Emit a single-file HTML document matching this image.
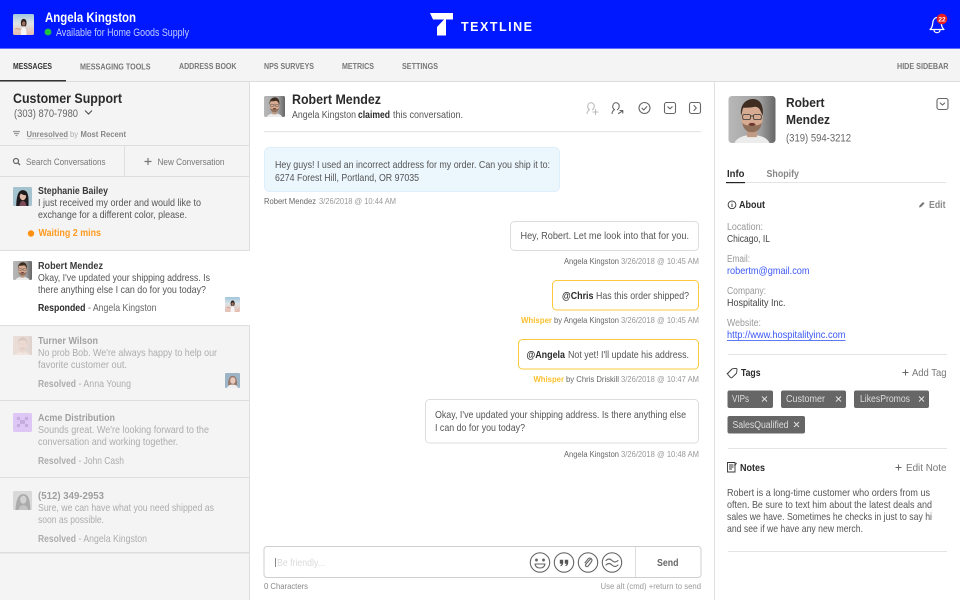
<!DOCTYPE html>
<html lang="en"><head><meta charset="utf-8"><title>Textline</title>
<style>
html,body{margin:0;padding:0;width:960px;height:600px;overflow:hidden;background:#fff}
svg{display:block;filter:blur(.3px)}
text{font-family:"Liberation Sans",sans-serif;font-size:10.300px;fill:#555;white-space:pre}
.b{font-weight:700}
.dk{fill:#2a2a2a}
.nav{font-size:7.800px;font-weight:700;fill:#777}
.name{font-size:10.300px;font-weight:700;fill:#3a3a3a}
.meta{font-size:8.600px;fill:#999}
.metad{font-size:8.600px;fill:#666}
.w{font-size:8.600px;font-weight:700;fill:#fcc02e}
.lab{font-size:9.700px;fill:#999}
.val{font-size:10.200px;fill:#444}
.act{font-size:10.200px;fill:#777}
.chip{font-size:9.800px;fill:#ddd}
.ic{fill:none;stroke:#666;stroke-width:1.1;stroke-linecap:round;stroke-linejoin:round}
</style></head><body>
<svg width="960" height="600" viewBox="0 0 960 600" xmlns="http://www.w3.org/2000/svg">
<defs>
<linearGradient id="mbg" x1="0" x2="1" y1="0" y2="0"><stop offset="0" stop-color="#b8b8b8"/><stop offset=".65" stop-color="#a2a2a2"/><stop offset="1" stop-color="#666"/></linearGradient>
<linearGradient id="abg" x1="0" x2="0" y1="0" y2="1"><stop offset="0" stop-color="#9fc6de"/><stop offset=".45" stop-color="#dfe3e6"/><stop offset="1" stop-color="#e6bcae"/></linearGradient>
<clipPath id="rc"><rect width="48" height="48" rx="3.500"/></clipPath>
<symbol id="man" viewBox="0 0 48 48"><g clip-path="url(#rc)">
<rect width="48" height="48" fill="url(#mbg)"/>
<path d="M6 48c3-6 10-8 18-8s15 2 18 8z" fill="#ececec"/>
<rect x="19" y="33" width="10" height="9" fill="#c09a84"/>
<ellipse cx="24" cy="22" rx="11" ry="15" fill="#d6ab92"/>
<path d="M13 20c-2-11 5-17 12-17s11 6 10 17l-2-4c-1-3-3-5-6-5-5 1-9 1-12 1-1 2-1 5-2 8z" fill="#3f2d22"/>
<path d="M14 27c1 7 5 10 10 10s9-3 10-10c-2 3-6 3-10 3s-8 0-10-3z" fill="#7a5c48" fill-opacity=".75"/>
<ellipse cx="24" cy="29" rx="3.500" ry="1.500" fill="#6f3530"/>
<g fill="none" stroke="#333" stroke-width=".8"><rect x="14.500" y="19" width="8" height="5" rx="1.500"/><rect x="25.500" y="19" width="8" height="5" rx="1.500"/><path d="M22.500 20.500h3"/></g>
</g></symbol>
<symbol id="angela" viewBox="0 0 48 48"><g clip-path="url(#rc)">
<rect width="48" height="48" fill="url(#abg)"/>
<path d="M18 48c0-11 1-18 6-18s7 7 7 18z" fill="#f6f6f6"/>
<path d="M18 20c0-6 3-9 6.500-9s6.500 3 6.500 9c0 4-1 7-2 8h-9c-1-1-2-4-2-8z" fill="#2c2320"/>
<ellipse cx="24.500" cy="22" rx="3.800" ry="4.800" fill="#a0715c"/>
<path d="M5 32c5-1 9 0 13 2l-1 3c-4-1-8-2-12-2z" fill="#dba99a"/>
</g></symbol>
<symbol id="steph" viewBox="0 0 48 48"><g clip-path="url(#rc)">
<rect width="48" height="48" fill="#a5c2cf"/>
<path d="M8 48c1-20 3-40 17-40s15 18 14 40z" fill="#1e1a1c"/>
<ellipse cx="25" cy="23" rx="8" ry="10.500" fill="#e2bba8"/>
<path d="M15 22c1-7 6-10 11-10s8 4 8 9c-6 0-13-3-14-5-1 3-3 5-5 6z" fill="#1e1a1c"/>
<path d="M16 48c1-9 5-13 9-13s8 4 9 13z" fill="#7d4a58"/>
</g></symbol>
<symbol id="anna" viewBox="0 0 48 48"><g clip-path="url(#rc)">
<rect width="48" height="48" fill="#7f9fb6"/>
<path d="M10 40c-1-20 5-31 15-31s15 11 13 31z" fill="#7a4f3c"/>
<ellipse cx="25" cy="24" rx="8.500" ry="10.500" fill="#e4bcaa"/>
<path d="M6 48c3-9 10-11 18-11s15 2 18 11z" fill="#eee"/>
</g></symbol>
<symbol id="gray" viewBox="0 0 48 48"><g clip-path="url(#rc)">
<rect width="48" height="48" fill="#b9b9b9"/>
<path d="M6 48c2-24 6-40 20-40s17 16 18 40z" fill="#555"/>
<ellipse cx="26" cy="22" rx="8" ry="10" fill="#aaa"/>
<path d="M14 48c2-9 6-12 12-12s10 3 12 12z" fill="#8b8b8b"/>
</g></symbol>
</defs>

<!-- header -->
<rect width="960" height="49" fill="#0018ff"/>
<rect y="48" width="960" height="1" fill="#5d6cff"/>
<use href="#angela" x="13" y="14" width="21" height="21"/>
<text x="45" y="22" textLength="91" lengthAdjust="spacingAndGlyphs" style="font-size:13.500px;fill:#fff;font-weight:700">Angela Kingston</text>
<circle cx="48" cy="32" r="3.400" fill="#22c33c"/>
<text x="56" y="36" textLength="133" lengthAdjust="spacingAndGlyphs" style="font-size:10.800px;fill:#c3cbff">Available for Home Goods Supply</text>
<path d="M430 13H453V19.500H446V35.500H437V27L444 19.500H433z" fill="#fff"/>
<text x="461" y="31" textLength="71" lengthAdjust="spacing" class="b" style="font-size:12.500px;fill:#fff">TEXTLINE</text>
<path d="M930 29.500c2.500-2 2.500-4.500 2.800-7 .3-3 2.200-5 4.200-5s3.900 2 4.200 5c.3 2.500.3 5 2.800 7z M934 29.700c0 4 6 4 6 0" fill="none" stroke="#fff" stroke-width="1.200" stroke-linejoin="round"/>
<circle cx="942" cy="19" r="5.300" fill="#e81d20"/>
<text x="942" y="21.300" text-anchor="middle" class="b" style="font-size:6.500px;fill:#fff">22</text>

<!-- nav -->
<rect y="49" width="960" height="32" fill="#f4f4f4"/>
<rect y="81" width="960" height="1" fill="#dddddd"/>
<rect y="80" width="66" height="1.500" fill="#333"/>
<text x="13" y="69" textLength="39" lengthAdjust="spacingAndGlyphs" class="nav" style="fill:#333">MESSAGES</text>
<text x="80" y="69.500" textLength="70.500" lengthAdjust="spacingAndGlyphs" class="nav">MESSAGING TOOLS</text>
<text x="179" y="69" textLength="57.500" lengthAdjust="spacingAndGlyphs" class="nav">ADDRESS BOOK</text>
<text x="264" y="69" textLength="50" lengthAdjust="spacingAndGlyphs" class="nav">NPS SURVEYS</text>
<text x="342" y="69" textLength="32" lengthAdjust="spacingAndGlyphs" class="nav">METRICS</text>
<text x="402" y="69" textLength="36" lengthAdjust="spacingAndGlyphs" class="nav">SETTINGS</text>
<text x="897" y="69" textLength="51.500" lengthAdjust="spacingAndGlyphs" class="nav">HIDE SIDEBAR</text>

<!-- left panel -->
<rect y="82" width="249" height="518" fill="#f4f4f4"/>
<rect x="249" y="82" width="1" height="518" fill="#dedede"/>
<text x="13" y="103" textLength="109" lengthAdjust="spacingAndGlyphs" class="b dk" style="font-size:14px">Customer Support</text>
<text x="14" y="117" textLength="64" lengthAdjust="spacingAndGlyphs" style="font-size:10.800px;fill:#666">(303) 870-7980</text>
<path d="M85 110.500l3.500 3.500 3.500-3.500" fill="none" stroke="#555" stroke-width="1.200"/>
<path d="M13 131.500h7M14 133.500h5M15.500 135.500h2" stroke="#999" stroke-width="1.200"/>
<text x="26.500" y="137" textLength="41.500" lengthAdjust="spacingAndGlyphs" class="b" style="font-size:8.600px;fill:#888">Unresolved</text>
<rect x="26.500" y="138.500" width="41.500" height=".6" fill="#bbb"/>
<text x="70" y="137" textLength="8" lengthAdjust="spacingAndGlyphs" style="font-size:8.600px;fill:#aaa">by</text>
<text x="80.500" y="137" textLength="45.500" lengthAdjust="spacingAndGlyphs" class="b" style="font-size:8.600px;fill:#888">Most Recent</text>
<rect y="145" width="249" height="1" fill="#dedede"/>
<rect y="176" width="249" height="1" fill="#dedede"/>
<rect x="124" y="146" width="1" height="30" fill="#dedede"/>
<circle cx="16" cy="161" r="2.500" fill="none" stroke="#666" stroke-width="1.200"/><path d="M18 163l2 2" stroke="#666" stroke-width="1.400"/>
<text x="26" y="165" textLength="79.500" lengthAdjust="spacingAndGlyphs" style="font-size:9.500px;fill:#777">Search Conversations</text>
<path d="M148 158v7M144.500 161.500h7" stroke="#777" stroke-width="1.200"/>
<text x="157.500" y="165" textLength="67" lengthAdjust="spacingAndGlyphs" style="font-size:9.500px;fill:#777">New Conversation</text>

<use href="#steph" x="13" y="187" width="19" height="19"/>
<text x="38" y="194" textLength="70" lengthAdjust="spacingAndGlyphs" class="name">Stephanie Bailey</text>
<text x="38" y="206" textLength="163" lengthAdjust="spacingAndGlyphs">I just received my order and would like to</text>
<text x="38" y="218" textLength="149" lengthAdjust="spacingAndGlyphs">exchange for a different color, please.</text>
<circle cx="31" cy="233.500" r="3.200" fill="#ff9012"/>
<text x="38.500" y="236" textLength="62.500" lengthAdjust="spacingAndGlyphs" class="b" style="fill:#ff9a1f">Waiting 2 mins</text>
<rect y="250" width="250" height="1" fill="#dedede"/>

<rect y="251" width="250" height="74" fill="#fff"/>
<use href="#man" x="13" y="261" width="19" height="19"/>
<text x="38" y="269" textLength="65" lengthAdjust="spacingAndGlyphs" class="name">Robert Mendez</text>
<text x="38" y="281" textLength="172" lengthAdjust="spacingAndGlyphs">Okay, I've updated your shipping address. Is</text>
<text x="38" y="293" textLength="168" lengthAdjust="spacingAndGlyphs">there anything else I can do for you today?</text>
<text x="38" y="311" textLength="47.500" lengthAdjust="spacingAndGlyphs" class="b dk">Responded</text>
<text x="88" y="311" textLength="68.500" lengthAdjust="spacingAndGlyphs" style="fill:#666">- Angela Kingston</text>
<use href="#angela" x="225" y="297" width="15" height="15"/>
<rect y="325" width="250" height="1" fill="#dedede"/>

<g opacity=".45">
<g opacity=".7"><use href="#man" x="13" y="336" width="19" height="19"/></g>
<rect x="13" y="336" width="19" height="19" rx="1.500" fill="#f3b9a5" opacity=".55"/>
<text x="38" y="344" textLength="60" lengthAdjust="spacingAndGlyphs" class="name">Turner Wilson</text>
<text x="38" y="356" textLength="179" lengthAdjust="spacingAndGlyphs">No prob Bob. We're always happy to help our</text>
<text x="38" y="368" textLength="89" lengthAdjust="spacingAndGlyphs">favorite customer out.</text>
<text x="38" y="387" textLength="38" lengthAdjust="spacingAndGlyphs" class="b">Resolved</text>
<text x="78.500" y="387" textLength="52.500" lengthAdjust="spacingAndGlyphs">- Anna Young</text>
</g>
<g opacity=".75"><use href="#anna" x="225" y="373" width="15" height="15"/></g>
<rect y="400" width="250" height="1" fill="#dedede"/>

<g opacity=".45">
<rect x="13" y="413" width="19" height="19" rx="1.500" fill="#c592f5"/>
<path d="M17 417h3v3h-3zM25 417h3v3h-3zM20 420h5v4h-5zM17 424h3v3h-3zM25 424h3v3h-3z" fill="#8a58c0"/>
<text x="38" y="421" textLength="77" lengthAdjust="spacingAndGlyphs" class="name">Acme Distribution</text>
<text x="38" y="433" textLength="171" lengthAdjust="spacingAndGlyphs">Sounds great. We're looking forward to the</text>
<text x="38" y="445" textLength="140" lengthAdjust="spacingAndGlyphs">conversation and working together.</text>
<text x="38" y="464" textLength="38" lengthAdjust="spacingAndGlyphs" class="b">Resolved</text>
<text x="78.500" y="464" textLength="45.500" lengthAdjust="spacingAndGlyphs">- John Cash</text>
</g>
<rect y="477" width="250" height="1" fill="#dedede"/>

<g opacity=".45">
<use href="#gray" x="13" y="491" width="19" height="19"/>
<text x="38" y="499" textLength="66" lengthAdjust="spacingAndGlyphs" class="name">(512) 349-2953</text>
<text x="38" y="511" textLength="176" lengthAdjust="spacingAndGlyphs">Sure, we can have what you need shipped as</text>
<text x="38" y="523" textLength="66" lengthAdjust="spacingAndGlyphs">soon as possible.</text>
<text x="38" y="542" textLength="38" lengthAdjust="spacingAndGlyphs" class="b">Resolved</text>
<text x="78.500" y="542" textLength="68.500" lengthAdjust="spacingAndGlyphs">- Angela Kingston</text>
</g>
<rect y="552" width="250" height="1.500" fill="#dedede"/>

<!-- center -->
<use href="#man" x="264" y="96" width="21" height="21"/>
<text x="292" y="104" textLength="89" lengthAdjust="spacingAndGlyphs" class="b dk" style="font-size:13.500px">Robert Mendez</text>
<text x="292" y="118" textLength="64" lengthAdjust="spacingAndGlyphs">Angela Kingston</text>
<text x="358" y="118" textLength="32" lengthAdjust="spacingAndGlyphs" class="b dk">claimed</text>
<text x="393" y="118" textLength="70" lengthAdjust="spacingAndGlyphs">this conversation.</text>
<rect x="264" y="131" width="437" height="1.200" fill="#e6e6e6"/>

<g class="ic" style="stroke:#bbb"><path d="M587 113.500c.3-2 1-3 2.500-3.800-1.500-1-2-2.500-1.700-4 .3-1.800 1.700-3 3.200-3s3 1.200 3.200 3c.1 1.500-.4 3-1.800 4"/><path d="M593 112h5M595.500 109.500v5"/></g>
<g class="ic"><path d="M612 113.500c.3-2 1-3 2.500-3.800-1.500-1-2-2.500-1.700-4 .3-1.800 1.700-3 3.200-3s3 1.200 3.200 3c.1 1.500-.4 3-1.800 4"/><path d="M618.500 113.500l4-2.500M620 110.500h2.800v2.600"/></g>
<g class="ic"><circle cx="644.500" cy="108" r="5.500"/><path d="M642 108.200l1.800 1.800 3-3.400"/></g>
<g class="ic"><rect x="664.500" y="102.500" width="11" height="11" rx="2"/><path d="M667.800 106.800l2.200 2 2.200-2"/></g>
<g class="ic"><rect x="689.500" y="102.500" width="11" height="11" rx="2"/><path d="M694 105.500l2.300 2.500-2.300 2.500"/></g>

<rect x="264.500" y="147.500" width="295" height="44" rx="5" fill="#ebf6fd" stroke="#deeefa"/>
<text x="275" y="168" textLength="275" lengthAdjust="spacingAndGlyphs">Hey guys! I used an incorrect address for my order. Can you ship it to:</text>
<text x="275" y="181" textLength="144" lengthAdjust="spacingAndGlyphs">6274 Forest Hill, Portland, OR 97035</text>
<text x="264" y="204" textLength="52" lengthAdjust="spacingAndGlyphs" class="metad">Robert Mendez</text>
<text x="319" y="204" textLength="77" lengthAdjust="spacingAndGlyphs" class="meta">3/26/2018 @ 10:44 AM</text>

<rect x="510.500" y="221.500" width="188" height="29" rx="4" fill="#fff" stroke="#dddddd"/>
<text x="520.500" y="239" textLength="168.500" lengthAdjust="spacingAndGlyphs">Hey, Robert. Let me look into that for you.</text>
<text x="564" y="264" textLength="55" lengthAdjust="spacingAndGlyphs" class="metad">Angela Kingston</text>
<text x="621" y="264" textLength="78" lengthAdjust="spacingAndGlyphs" class="meta">3/26/2018 @ 10:45 AM</text>

<rect x="552.500" y="280.500" width="146" height="29.500" rx="4" fill="#fff" stroke="#fcc93c"/>
<text x="562" y="299" textLength="31.500" lengthAdjust="spacingAndGlyphs" class="b dk">@Chris</text>
<text x="596" y="299" textLength="93" lengthAdjust="spacingAndGlyphs">Has this order shipped?</text>
<text x="521" y="323" textLength="31" lengthAdjust="spacingAndGlyphs" class="w">Whisper</text>
<text x="554" y="323" textLength="65" lengthAdjust="spacingAndGlyphs" class="metad">by Angela Kingston</text>
<text x="621" y="323" textLength="78" lengthAdjust="spacingAndGlyphs" class="meta">3/26/2018 @ 10:45 AM</text>

<rect x="518.500" y="339.500" width="180" height="29.500" rx="4" fill="#fff" stroke="#fcc93c"/>
<text x="526.500" y="358" textLength="38.500" lengthAdjust="spacingAndGlyphs" class="b dk">@Angela</text>
<text x="568" y="358" textLength="121" lengthAdjust="spacingAndGlyphs">Not yet! I'll update his address.</text>
<text x="533.500" y="382" textLength="30.500" lengthAdjust="spacingAndGlyphs" class="w">Whisper</text>
<text x="566" y="382" textLength="53" lengthAdjust="spacingAndGlyphs" class="metad">by Chris Driskill</text>
<text x="621" y="382" textLength="78" lengthAdjust="spacingAndGlyphs" class="meta">3/26/2018 @ 10:47 AM</text>

<rect x="425.500" y="399.500" width="273" height="43.500" rx="4" fill="#fff" stroke="#dddddd"/>
<text x="435" y="418" textLength="251" lengthAdjust="spacingAndGlyphs">Okay, I've updated your shipping address. Is there anything else</text>
<text x="435" y="431" textLength="90" lengthAdjust="spacingAndGlyphs">I can do for you today?</text>
<text x="564" y="457" textLength="55" lengthAdjust="spacingAndGlyphs" class="metad">Angela Kingston</text>
<text x="621" y="457" textLength="78" lengthAdjust="spacingAndGlyphs" class="meta">3/26/2018 @ 10:48 AM</text>

<!-- composer -->
<rect x="264" y="546.500" width="437" height="31" rx="3" fill="#fff" stroke="#cfcfcf"/>
<rect x="635" y="547" width="1" height="30" fill="#dddddd"/>
<rect x="275" y="558" width="1" height="9" fill="#888"/>
<text x="277" y="566" textLength="48" lengthAdjust="spacingAndGlyphs" style="fill:#dadada">Be friendly...</text>
<g class="ic">
<circle cx="540" cy="562.500" r="9.700"/><circle cx="536.500" cy="560" r=".9" fill="#666"/><circle cx="543.500" cy="560" r=".9" fill="#666"/><path d="M535 564h10c-.5 3-2.500 4-5 4s-4.500-1-5-4z"/>
<circle cx="564" cy="562.500" r="9.700"/>
<circle cx="588" cy="562.500" r="9.700"/><path d="M590.500 559l-4.500 5c-1.500 2 .8 3.500 2.200 2l3-4c2-2.600-1-5.200-3.200-3l-3 3.800"/>
<circle cx="612" cy="562.500" r="9.700"/><path d="M606 560.500c2-2 4-2 6 0s4 2 6 0M606 565c2-2 4-2 6 0s4 2 6 0"/>
</g>
<path d="M559.800 559.800h3.400v3.100c0 1.700-1 2.800-2.500 3.300l-.4-1c.8-.3 1.200-.8 1.300-1.500h-1.800zM564.800 559.800h3.400v3.100c0 1.700-1 2.800-2.500 3.300l-.4-1c.8-.3 1.200-.8 1.300-1.500h-1.800z" fill="#555"/>
<text x="657" y="566" textLength="21.500" lengthAdjust="spacingAndGlyphs" class="b" style="fill:#666">Send</text>
<text x="264" y="589" textLength="44" lengthAdjust="spacingAndGlyphs" style="font-size:8.600px;fill:#888">0 Characters</text>
<text x="600.500" y="589" textLength="100.500" lengthAdjust="spacingAndGlyphs" style="font-size:8.600px;fill:#999">Use alt (cmd) +return to send</text>

<!-- right panel -->
<rect x="714" y="82" width="1" height="518" fill="#e0e0e0"/>
<use href="#man" x="728.500" y="96" width="47" height="47"/>
<text x="786" y="107" textLength="38.500" lengthAdjust="spacingAndGlyphs" class="b dk" style="font-size:13.200px">Robert</text>
<text x="786" y="124" textLength="44" lengthAdjust="spacingAndGlyphs" class="b dk" style="font-size:13.200px">Mendez</text>
<text x="786" y="141.500" textLength="65" lengthAdjust="spacingAndGlyphs" style="font-size:10.800px;fill:#666">(319) 594-3212</text>
<g class="ic"><rect x="937" y="98.500" width="11" height="11" rx="2"/><path d="M940.300 103l2.200 2 2.200-2"/></g>
<text x="727" y="177" textLength="17.500" lengthAdjust="spacingAndGlyphs" class="b dk">Info</text>
<text x="766.500" y="177" textLength="32.500" lengthAdjust="spacingAndGlyphs" class="b" style="fill:#888">Shopify</text>
<rect x="726" y="182" width="220" height="1" fill="#e4e4e4"/>
<rect x="726" y="182" width="19" height="1.200" fill="#222"/>

<circle cx="732" cy="204.800" r="3.900" fill="none" stroke="#333" stroke-width=".9"/><path d="M732 204v3M732 202.500v.8" stroke="#333" stroke-width=".9"/>
<text x="739" y="208" textLength="26" lengthAdjust="spacingAndGlyphs" class="b dk">About</text>
<path d="M919 207.500l.5-2 3.500-3.500 1.500 1.500-3.500 3.500z" fill="#777"/>
<text x="929" y="208" textLength="16.500" lengthAdjust="spacingAndGlyphs" class="b" style="fill:#888">Edit</text>
<text x="727" y="230" textLength="36" lengthAdjust="spacingAndGlyphs" class="lab">Location:</text>
<text x="727" y="242" textLength="43" lengthAdjust="spacingAndGlyphs" class="val">Chicago, IL</text>
<text x="727" y="262" textLength="23" lengthAdjust="spacingAndGlyphs" class="lab">Email:</text>
<text x="727" y="274" textLength="82.500" lengthAdjust="spacingAndGlyphs" class="val" style="fill:#3c58f5">robertm@gmail.com</text>
<text x="727" y="294" textLength="39" lengthAdjust="spacingAndGlyphs" class="lab">Company:</text>
<text x="727" y="306" textLength="58.500" lengthAdjust="spacingAndGlyphs" class="val">Hospitality Inc.</text>
<text x="727" y="326" textLength="34" lengthAdjust="spacingAndGlyphs" class="lab">Website:</text>
<text x="727" y="338" textLength="118.500" lengthAdjust="spacingAndGlyphs" class="val" style="fill:#3c58f5">http://www.hospitalityinc.com</text>
<rect x="727" y="340" width="118.500" height=".8" fill="#3c58f5"/>
<rect x="728" y="354" width="219" height="1" fill="#e4e4e4"/>

<path d="M727.500 373.500l4.500-4.500c.3-.3 4.500-.7 4.800-.4.3.3 0 4.500-.4 4.800l-4.500 4.300c-.4.300-.8.300-1.100 0l-2.800-2.900c-.4-.4-.4-.8-.1-1.300z" fill="none" stroke="#333" stroke-width=".9"/>
<text x="741" y="376" textLength="19.500" lengthAdjust="spacingAndGlyphs" class="b dk">Tags</text>
<path d="M905.500 369.500v6M902.500 372.500h6" stroke="#666" stroke-width="1"/>
<text x="912" y="376" textLength="34.500" lengthAdjust="spacingAndGlyphs" class="act">Add Tag</text>

<rect x="727.500" y="390.500" width="45.500" height="17.500" rx="2" fill="#666"/>
<text x="732" y="402" textLength="17" lengthAdjust="spacingAndGlyphs" class="chip">VIPs</text>
<path d="M762 396.500l5 5M767 396.500l-5 5" stroke="#e6e6e6" stroke-width=".9"/>
<rect x="781" y="390.500" width="65" height="17.500" rx="2" fill="#666"/>
<text x="786" y="402" textLength="39" lengthAdjust="spacingAndGlyphs" class="chip">Customer</text>
<path d="M836 396.500l5 5M841 396.500l-5 5" stroke="#e6e6e6" stroke-width=".9"/>
<rect x="854" y="390.500" width="75" height="17.500" rx="2" fill="#666"/>
<text x="860" y="402" textLength="50" lengthAdjust="spacingAndGlyphs" class="chip">LikesPromos</text>
<path d="M919 396.500l5 5M924 396.500l-5 5" stroke="#e6e6e6" stroke-width=".9"/>
<rect x="727.500" y="416" width="77.500" height="17.500" rx="2" fill="#666"/>
<text x="732.500" y="428" textLength="56" lengthAdjust="spacingAndGlyphs" class="chip">SalesQualified</text>
<path d="M794 422l5 5M799 422l-5 5" stroke="#e6e6e6" stroke-width=".9"/>
<rect x="728" y="448" width="219" height="1" fill="#e4e4e4"/>

<path d="M735 472v-9.500h-7.500v9.500zM729 465h4.500M729 467h4.500M729 469h3" fill="none" stroke="#333" stroke-width=".9"/><path d="M734.500 466l2-3" stroke="#333" stroke-width="1"/>
<text x="740" y="471" textLength="25" lengthAdjust="spacingAndGlyphs" class="b dk">Notes</text>
<path d="M898.500 464.500v6M895.500 467.500h6" stroke="#666" stroke-width="1"/>
<text x="906" y="471" textLength="40.500" lengthAdjust="spacingAndGlyphs" class="act">Edit Note</text>
<text x="727" y="496" textLength="203" lengthAdjust="spacingAndGlyphs">Robert is a long-time customer who orders from us</text>
<text x="727" y="508" textLength="205" lengthAdjust="spacingAndGlyphs">often. Be sure to text him about the latest deals and</text>
<text x="727" y="520" textLength="205" lengthAdjust="spacingAndGlyphs">sales we have. Sometimes he checks in just to say hi</text>
<text x="727" y="532" textLength="136" lengthAdjust="spacingAndGlyphs">and see if we have any new merch.</text>
<rect x="728" y="551" width="219" height="1" fill="#e4e4e4"/>
</svg>
</body></html>
